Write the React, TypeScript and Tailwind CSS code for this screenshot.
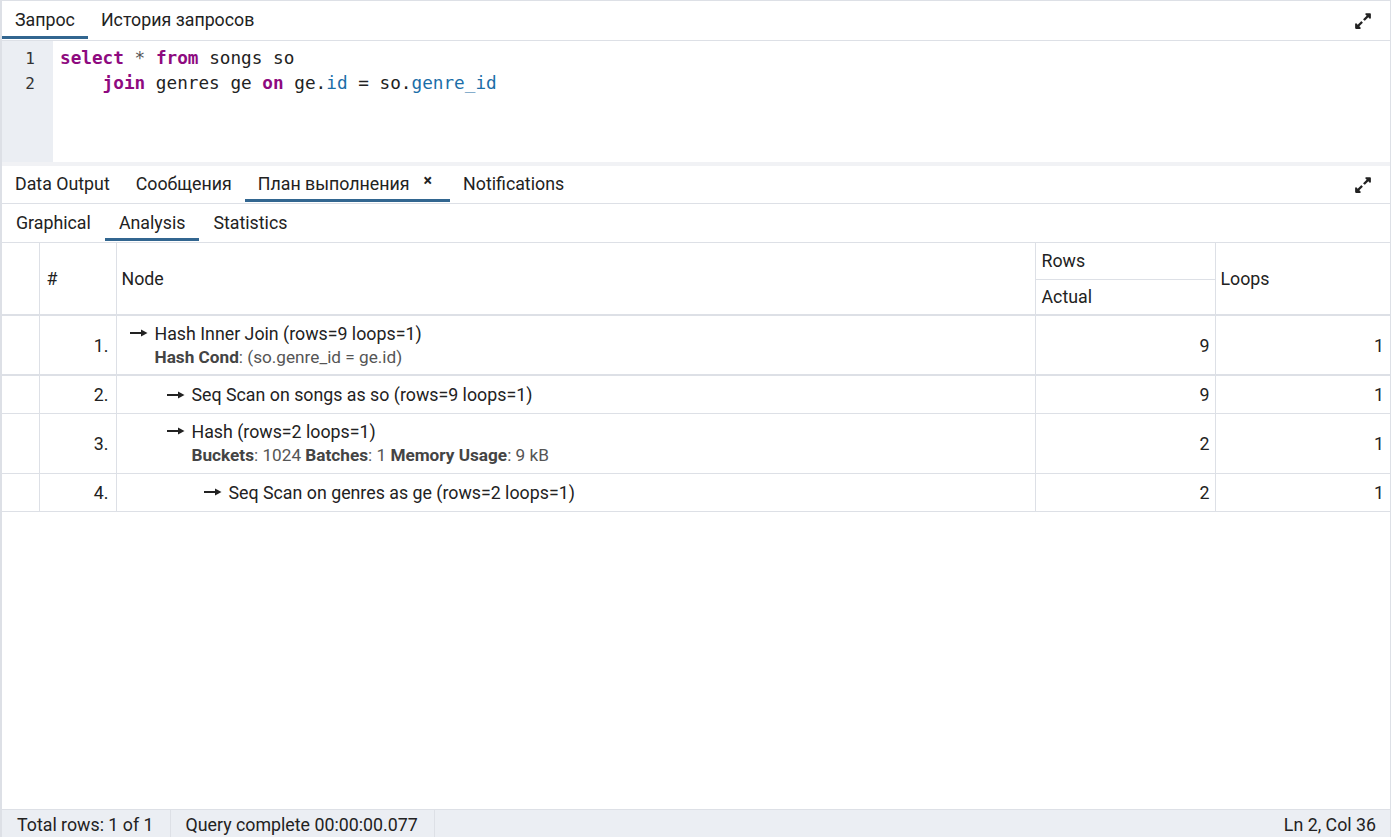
import { FaExpandAlt } from "react-icons/fa";

const ui = { fontFamily: "Roboto, 'Liberation Sans', sans-serif" };
const mono = { fontFamily: "'DejaVu Sans Mono', 'Liberation Mono', monospace" };

function Arrow() {
  return (
    <svg width="19" height="10" viewBox="0 0 19 10" className="inline-block mr-[7px] mb-[3px]">
      <path d="M1 5h13" stroke="#222" strokeWidth="2" />
      <path d="M12 1.5L18.5 5L12 8.5z" fill="#222" />
    </svg>
  );
}

function Tab({
  label,
  active,
  close,
  wide,
}: {
  label: string;
  active?: boolean;
  close?: boolean;
  wide?: boolean;
}) {
  return (
    <div
      className={
        "relative flex items-center h-full text-[17.8px] text-[#222] " +
        (wide ? "px-[14px] " : "px-[13px] ") +
        (close ? "pr-[18px]" : "")
      }
    >
      {label}
      {close && <span className="ml-[14px] -mt-[8px] text-[16px] font-bold leading-none">×</span>}
      {active && <div className="absolute left-0 right-0 bottom-[1px] h-[3px] bg-[#326690]" />}
    </div>
  );
}

const K = ({ children }: { children: string }) => (
  <span className="text-[#8e0a7f] font-bold">{children}</span>
);
const P = ({ children }: { children: string }) => <span className="text-[#1b6ea8]">{children}</span>;

type Row = {
  n: string;
  depth: number;
  title: string;
  sub?: [string, string][];
  rows: number;
  loops: number;
  thick?: boolean;
};

const rows: Row[] = [
  {
    n: "1.",
    depth: 0,
    title: "Hash Inner Join (rows=9 loops=1)",
    sub: [["Hash Cond", "(so.genre_id = ge.id)"]],
    rows: 9,
    loops: 1,
    thick: true,
  },
  { n: "2.", depth: 1, title: "Seq Scan on songs as so (rows=9 loops=1)", rows: 9, loops: 1 },
  {
    n: "3.",
    depth: 1,
    title: "Hash (rows=2 loops=1)",
    sub: [
      ["Buckets", "1024"],
      ["Batches", "1"],
      ["Memory Usage", "9 kB"],
    ],
    rows: 2,
    loops: 1,
  },
  { n: "4.", depth: 2, title: "Seq Scan on genres as ge (rows=2 loops=1)", rows: 2, loops: 1 },
];

const pad = ["pl-[12px]", "pl-[49px]", "pl-[86px]"];

export default function App() {
  return (
    <div
      style={ui}
      className="w-[1391px] h-[837px] flex flex-col bg-white text-[#222] border-l-2 border-r border-t border-[#dde0e6] overflow-hidden"
    >
      {/* query tabs */}
      <div className="h-[40px] flex items-stretch border-b border-[#dde0e6] shrink-0">
        <Tab label="Запрос" active />
        <Tab label="История запросов" />
        <div className="flex-1" />
        <div className="flex items-center pr-[18px]">
          <FaExpandAlt className="text-[#222] w-[18px] h-[18px]" />
        </div>
      </div>

      {/* editor */}
      <div className="h-[121px] flex shrink-0 text-[17.7px]" style={mono}>
        <div className="w-[51px] bg-[#ebeef3] pt-[5px] pr-[18px] text-right text-[#333] text-[16px]">
          <div className="h-[25px] leading-[25px]">1</div>
          <div className="h-[25px] leading-[25px]">2</div>
        </div>
        <div className="pl-[7px] pt-[5px] whitespace-pre text-[#222]">
          <div className="h-[25px] leading-[25px]">
            <K>select</K> <span className="text-[#555]">*</span> <K>from</K> songs so
          </div>
          <div className="h-[25px] leading-[25px]">
            {"    "}
            <K>join</K> genres ge <K>on</K> ge.<P>id</P> = so.<P>genre_id</P>
          </div>
        </div>
      </div>
      <div className="h-[4px] bg-[#f1f2f5] shrink-0" />

      {/* result tabs */}
      <div className="h-[38px] flex items-stretch border-b border-[#dde0e6] shrink-0">
        <Tab label="Data Output" />
        <Tab label="Сообщения" />
        <Tab label="План выполнения" active close />
        <Tab label="Notifications" />
        <div className="flex-1" />
        <div className="flex items-center pr-[18px]">
          <FaExpandAlt className="text-[#222] w-[18px] h-[18px]" />
        </div>
      </div>

      {/* sub tabs */}
      <div className="h-[39px] flex items-stretch border-b border-[#dde0e6] shrink-0">
        <Tab label="Graphical" wide />
        <Tab label="Analysis" active wide />
        <Tab label="Statistics" wide />
      </div>

      {/* table */}
      <div className="flex-1 min-h-0">
        <table className="w-full border-collapse text-[17.8px] table-fixed">
          <colgroup>
            <col className="w-[37px]" />
            <col className="w-[77px]" />
            <col />
            <col className="w-[180px]" />
            <col className="w-[175px]" />
          </colgroup>
          <thead>
            <tr className="h-[36px]">
              <th rowSpan={2} className="border-r border-[#dde0e6] border-b-2" />
              <th rowSpan={2} className="border-r border-b-2 border-[#dde0e6] text-left font-normal pl-[7px] pt-[2px]">
                #
              </th>
              <th rowSpan={2} className="border-r border-b-2 border-[#dde0e6] text-left font-normal pl-[5px] pt-[2px]">
                Node
              </th>
              <th className="border-r border-b border-[#dde0e6] text-left font-normal pl-[6px] pt-[2px]">Rows</th>
              <th rowSpan={2} className="border-b-2 border-[#dde0e6] text-left font-normal pl-[5px] pt-[2px]">
                Loops
              </th>
            </tr>
            <tr className="h-[36px]">
              <th className="border-r border-b-2 border-[#dde0e6] text-left font-normal pl-[6px] pt-[2px]">
                Actual
              </th>
            </tr>
          </thead>
          <tbody>
            {rows.map((r) => (
              <tr
                key={r.n}
                className={
                  (r.sub ? "h-[60px] " : "h-[38px] ") +
                  (r.thick ? "border-b-2" : "border-b") +
                  " border-[#dde0e6]"
                }
              >
                <td className="border-r border-[#dde0e6]" />
                <td className="border-r border-[#dde0e6] text-right pr-[7px] pt-[2px]">{r.n}</td>
                <td className={"border-r border-[#dde0e6] " + pad[r.depth]}>
                  <div className="leading-[23px]">
                    <Arrow />
                    {r.title}
                  </div>
                  {r.sub && (
                    <div className="text-[17.2px] leading-[24px] pl-[26px] text-[#555]">
                      {r.sub.map(([k, v], i) => (
                        <span key={k}>
                          {i > 0 && " "}
                          <b className="font-bold text-[#444]">{k}</b>: {v}
                        </span>
                      ))}
                    </div>
                  )}
                </td>
                <td className="border-r border-[#dde0e6] text-right pr-[5px] pt-[2px]">{r.rows}</td>
                <td className="text-right pr-[6px] pt-[2px]">{r.loops}</td>
              </tr>
            ))}
          </tbody>
        </table>
      </div>

      {/* status bar */}
      <div className="h-[28px] shrink-0 flex items-stretch bg-[#ebeef3] border-t border-[#dde0e6] text-[17.8px] text-[#222]">
        <div className="flex items-center pt-[4px] pl-[15px] pr-[16px] border-r border-[#dde0e6]">
          Total rows: 1 of 1
        </div>
        <div className="flex items-center pt-[4px] pl-[15px] pr-[16px] border-r border-[#dde0e6]">
          Query complete 00:00:00.077
        </div>
        <div className="flex-1" />
        <div className="flex items-center pt-[4px] pr-[14px]">Ln 2, Col 36</div>
      </div>
    </div>
  );
}
